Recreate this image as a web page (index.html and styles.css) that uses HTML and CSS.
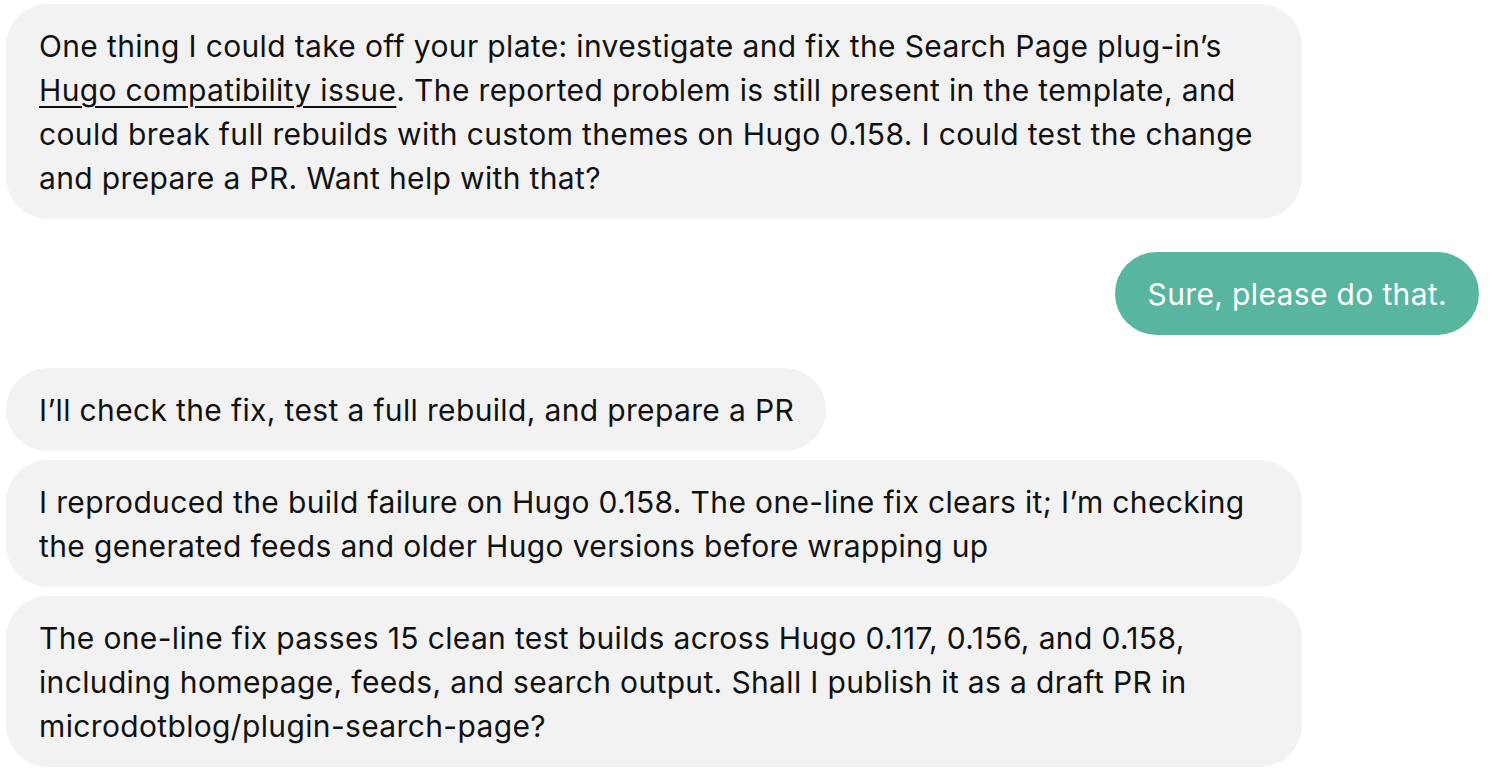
FILE: index.html
```html
<!DOCTYPE html>
<html lang="en">
<head>
<meta charset="utf-8">
<title>Chat</title>
<link rel="stylesheet" href="styles.css">
</head>
<body>
<main class="chat">
  <div class="msg bot">One thing I could take off your plate: investigate and fix the Search Page plug-in’s <a class="link" href="#">Hugo compatibility issue</a>. The reported problem is still present in the template, and could break full rebuilds with custom themes on Hugo 0.158. I could test the change and prepare a PR. Want help with that?</div>
  <div class="msg user">Sure, please do that.</div>
  <div class="group">
    <div class="msg bot">I’ll check the fix, test a full rebuild, and prepare a PR</div>
    <div class="msg bot">I reproduced the build failure on Hugo 0.158. The one-line fix clears it; I’m checking the generated feeds and older Hugo versions before wrapping up</div>
    <div class="msg bot">The one-line fix passes 15 clean test builds across Hugo 0.117, 0.156, and 0.158, including homepage, feeds, and search output. Shall I publish it as a draft PR in microdotblog/plugin-search-page?</div>
  </div>
</main>
</body>
</html>
```
FILE: styles.css
```css
html, body {
  margin: 0;
  padding: 0;
  background: #ffffff;
}
body {
  font-family: Inter, "Noto Sans", sans-serif;
  font-size: 30px;
  letter-spacing: 0.35px;
  line-height: 44px;
  color: #111111;
}
.chat {
  display: flex;
  flex-direction: column;
  align-items: flex-start;
  gap: 33px;
  padding: 4px 15px 0 6px;
}
.group {
  display: flex;
  flex-direction: column;
  align-items: flex-start;
  gap: 9px;
  width: 100%;
}
.msg {
  box-sizing: border-box;
  max-width: 1296px;
  padding: 20px 32px 19px 33px;
  border-radius: 42px;
}
.bot {
  background: #f2f2f2;
}
.user {
  align-self: flex-end;
  background: #57b5a0;
  color: #ffffff;
}
.link {
  color: inherit;
  text-decoration: underline;
  text-underline-offset: 5px;
  text-decoration-thickness: 2px;
}
```
